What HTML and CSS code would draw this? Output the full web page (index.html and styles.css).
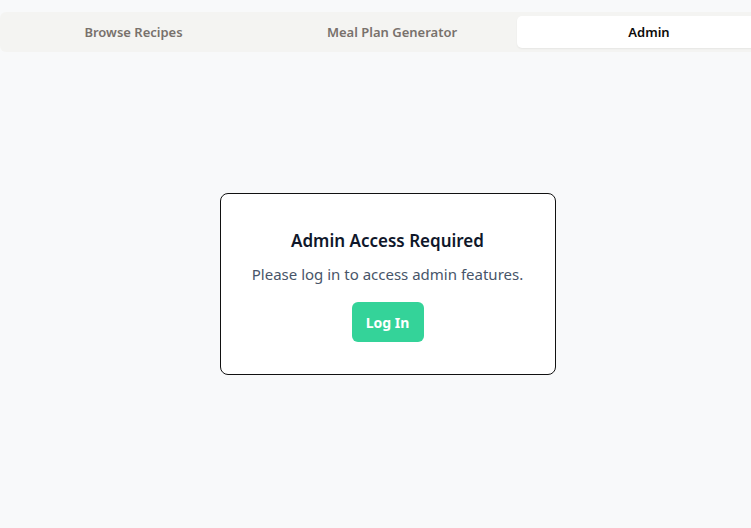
FILE: index.html
```html
<!DOCTYPE html>
<html lang="en">
<head>
<meta charset="utf-8">
<title>Admin</title>
<link rel="stylesheet" href="styles.css">
</head>
<body>
<div class="page">
  <nav class="tabs">
    <button class="tab">Browse Recipes</button>
    <button class="tab">Meal Plan Generator</button>
    <button class="tab active">Admin</button>
  </nav>
  <main class="content">
    <section class="card">
      <h2 class="card-title">Admin Access Required</h2>
      <p class="card-text">Please log in to access admin features.</p>
      <button class="btn-login">Log In</button>
    </section>
  </main>
</div>
</body>
</html>
```

FILE: styles.css
```css
* { box-sizing: border-box; }
html, body {
  margin: 0;
  padding: 0;
  background: #f8f9fa;
  font-family: "Noto Sans", "Open Sans", sans-serif;
  overflow: hidden;
}
.page {
  padding-top: 12px;
  width: 782px;
  height: 528px;
  overflow: hidden;
}
.tabs {
  display: grid;
  grid-template-columns: 259px 258px 260px;
  width: 782px;
  height: 40px;
  padding: 4px;
  background: #f4f4f2;
  border-radius: 6px;
}
.tab {
  border: none;
  background: transparent;
  font-family: inherit;
  font-size: 13px;
  font-weight: 600;
  color: #78716c;
  border-radius: 5px;
  cursor: pointer;
  padding: 0;
}
.tab.active {
  margin-left: -4px;
  background: #ffffff;
  color: #0c0a09;
  box-shadow: 0 1px 2px rgba(0,0,0,0.06);
}
.content {
  display: flex;
  justify-content: center;
  width: 775px;
  padding-top: 141px;
}
.card {
  width: 336px;
  background: #ffffff;
  border: 1px solid #111;
  border-radius: 8px;
  padding: 33px 16px 32px;
  text-align: center;
}
.card-title {
  margin: 0 0 7px;
  font-size: 17px;
  line-height: 28px;
  font-weight: 600;
  color: #0f172a;
}
.card-text {
  margin: 0 0 16px;
  font-size: 15px;
  line-height: 24px;
  color: #475569;
}
.btn-login {
  height: 40px;
  width: 72px;
  border: none;
  border-radius: 6px;
  background: #34d399;
  color: #ffffff;
  font-family: inherit;
  font-size: 14px;
  font-weight: 700;
  cursor: pointer;
}
```
